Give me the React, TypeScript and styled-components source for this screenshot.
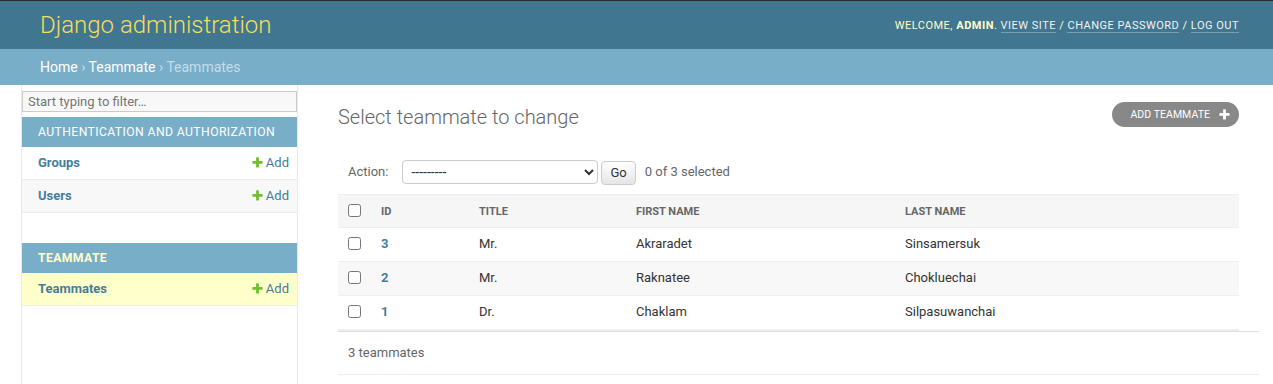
import styled, { createGlobalStyle } from 'styled-components';

const GlobalStyle = createGlobalStyle`
  html, body {
    margin: 0;
    padding: 0;
    background: #fff;
  }
  body {
    font-family: Roboto, "Liberation Sans", sans-serif;
    font-size: 14px;
    color: #333;
  }
  * { box-sizing: border-box; }
`;

interface Teammate {
  id: number;
  title: string;
  first: string;
  last: string;
}

const teammates: Teammate[] = [
  { id: 3, title: 'Mr.', first: 'Akraradet', last: 'Sinsamersuk' },
  { id: 2, title: 'Mr.', first: 'Raknatee', last: 'Chokluechai' },
  { id: 1, title: 'Dr.', first: 'Chaklam', last: 'Silpasuwanchai' },
];

const PlusIcon = ({ color = '#70bf2b' }: { color?: string }) => (
  <svg width="13" height="13" viewBox="0 0 1792 1792">
    <path
      fill={color}
      d="M1600 796v192q0 40-28 68t-68 28h-416v416q0 40-28 68t-68 28h-192q-40 0-68-28t-28-68v-416h-416q-40 0-68-28t-28-68v-192q0-40 28-68t68-28h416v-416q0-40 28-68t68-28h192q40 0 68 28t28 68v416h416q40 0 68 28t28 68z"
    />
  </svg>
);

const App = () => {
  return (
    <>
      <GlobalStyle />
      <Header>
        <Branding>Django administration</Branding>
        <UserTools>
          WELCOME, <strong>ADMIN</strong>. <TopLink>VIEW SITE</TopLink> / <TopLink>CHANGE PASSWORD</TopLink> /{' '}
          <TopLink>LOG OUT</TopLink>
        </UserTools>
      </Header>
      <Breadcrumbs>
        <a>Home</a> <Sep>›</Sep> <a>Teammate</a> <Sep>›</Sep> Teammates
      </Breadcrumbs>

      <Main>
        <ToggleNav />
        <Sidebar>
          <FilterInput placeholder="Start typing to filter…" />
          <Module>
            <Caption>AUTHENTICATION AND AUTHORIZATION</Caption>
            <NavRow>
              <NavLink>Groups</NavLink>
              <AddLink><PlusIcon /> Add</AddLink>
            </NavRow>
            <NavRow $alt>
              <NavLink>Users</NavLink>
              <AddLink><PlusIcon /> Add</AddLink>
            </NavRow>
          </Module>
          <Module>
            <Caption $current>TEAMMATE</Caption>
            <NavRow $current>
              <NavLink>Teammates</NavLink>
              <AddLink><PlusIcon /> Add</AddLink>
            </NavRow>
          </Module>
        </Sidebar>

        <Content>
          <TitleRow>
            <PageTitle>Select teammate to change</PageTitle>
            <ObjectTool>
              ADD TEAMMATE <PlusIcon color="#fff" />
            </ObjectTool>
          </TitleRow>

          <ChangeList>
            <Actions>
              <ActionLabel>Action:</ActionLabel>
              <ActionSelect defaultValue="">
                <option value="">---------</option>
                <option value="delete">Delete selected teammates</option>
              </ActionSelect>
              <GoButton>Go</GoButton>
              <Counter>0 of 3 selected</Counter>
            </Actions>

            <Results>
              <HeadRow>
                <Cell><Check type="checkbox" /></Cell>
                <HeadCell>ID</HeadCell>
                <HeadCell>TITLE</HeadCell>
                <HeadCell>FIRST NAME</HeadCell>
                <HeadCell>LAST NAME</HeadCell>
              </HeadRow>
              {teammates.map((t, i) => (
                <BodyRow key={t.id} $alt={i % 2 === 1}>
                  <Cell><Check type="checkbox" /></Cell>
                  <Cell><IdLink>{t.id}</IdLink></Cell>
                  <Cell>{t.title}</Cell>
                  <Cell>{t.first}</Cell>
                  <Cell>{t.last}</Cell>
                </BodyRow>
              ))}
            </Results>
          </ChangeList>
          <Paginator>3 teammates</Paginator>
        </Content>
      </Main>
    </>
  );
};

export default App;

const Header = styled.header`
  display: flex;
  justify-content: space-between;
  align-items: center;
  height: 49px;
  padding: 0 34px 0 40px;
  background: #417690;
  border-top: 1px solid #2b2b2b;
`;

const Branding = styled.h1`
  margin: 0;
  font-size: 24px;
  line-height: 28px;
  font-weight: 300;
  color: #f5dd5d;
`;

const UserTools = styled.div`
  font-size: 11px;
  letter-spacing: 0.5px;
  color: #ffc;
  line-height: 14px;
  margin-top: 1px;
  strong {
    font-weight: 700;
  }
`;

const TopLink = styled.a`
  color: #f2f2f2;
  border-bottom: 1px solid rgba(255, 255, 255, 0.3);
  text-decoration: none;
`;

const Breadcrumbs = styled.div`
  height: 36px;
  padding: 10px 40px;
  background: #79aec8;
  color: #c4dce8;
  font-size: 14px;
  line-height: 16px;
  a {
    color: #fff;
  }
`;

const Sep = styled.span`
  color: #c4dce8;
`;

const Main = styled.div`
  display: flex;
  min-height: calc(100vh - 85px);
`;

const ToggleNav = styled.div`
  flex: 0 0 22px;
  border-right: 1px solid #eaeaea;
`;

const Sidebar = styled.nav`
  flex: 0 0 276px;
  border-right: 1px solid #eaeaea;
`;

const FilterInput = styled.input`
  display: block;
  width: 100%;
  height: 21px;
  margin: 6px 0 5px;
  padding: 2px 5px;
  border: 1px solid #ccc;
  background: #f8f8f8;
  font-family: Roboto, "Liberation Sans", sans-serif;
  font-size: 13px;
  line-height: 15px;
  color: #333;
  outline: none;
  &::placeholder {
    color: #757575;
  }
`;

const Module = styled.div`
  margin-bottom: 30px;
`;

const Caption = styled.div<{ $current?: boolean }>`
  height: 30px;
  padding: 8px 16px;
  background: #79aec8;
  color: ${({ $current }) => ($current ? '#ffc' : '#fff')};
  font-weight: ${({ $current }) => ($current ? 700 : 400)};
  font-size: 12.2px;
  line-height: 14px;
  letter-spacing: 0.4px;
  white-space: nowrap;
`;

const NavRow = styled.div<{ $alt?: boolean; $current?: boolean }>`
  display: flex;
  justify-content: space-between;
  align-items: center;
  height: 33px;
  padding: 0 8px 2px 16px;
  border-bottom: 1px solid #eee;
  background: ${({ $alt, $current }) => ($current ? '#ffc' : $alt ? '#f8f8f8' : '#fff')};
  font-size: 13px;
`;

const NavLink = styled.a`
  color: #447e9b;
  font-weight: 700;
`;

const AddLink = styled.a`
  display: flex;
  align-items: center;
  gap: 2px;
  color: #447e9b;
  svg {
    margin-top: 1px;
  }
`;

const Content = styled.main`
  flex: 1;
  padding: 20px 14px 0 40px;
`;

const TitleRow = styled.div`
  display: flex;
  justify-content: space-between;
  align-items: flex-start;
  margin-right: 20px;
`;

const PageTitle = styled.h1`
  margin: 0 0 20px;
  font-size: 20px;
  line-height: 24px;
  font-weight: 300;
  color: #666;
`;

const ObjectTool = styled.a`
  display: flex;
  align-items: center;
  gap: 8px;
  height: 25px;
  margin-top: -3px;
  padding: 0 8px 0 18px;
  border-radius: 15px;
  background: #888;
  color: #fff;
  font-size: 10.5px;
  letter-spacing: 0.05px;
`;

const ChangeList = styled.div`
  margin-right: 20px;
`;

const Actions = styled.div`
  display: flex;
  align-items: center;
  height: 45px;
  padding: 10px;
  color: #666;
  font-size: 13px;
`;

const ActionLabel = styled.span`
  color: #666;
`;

const ActionSelect = styled.select`
  width: 196px;
  height: 24px;
  margin-left: 14px;
  padding: 0 0 0 4px;
  border: 1px solid #ccc;
  border-radius: 4px;
  background: #fff;
  font-family: Roboto, "Liberation Sans", sans-serif;
  font-size: 14px;
  color: #333;
`;

const GoButton = styled.button`
  height: 24px;
  margin: 1px 0 -1px 3px;
  padding: 4px 8px;
  border: 1px solid #ccc;
  border-radius: 4px;
  background: #fff;
  box-shadow: 0 -15px 20px -10px rgba(0, 0, 0, 0.15) inset;
  font-family: Roboto, "Liberation Sans", sans-serif;
  font-size: 13px;
  line-height: 1;
  color: #333;
`;

const Counter = styled.span`
  margin-left: 9px;
  color: #666;
`;

const Results = styled.div`
  border-bottom: 1px solid #eee;
`;

const gridCols = '33px 98px 157px 269px 1fr';

const HeadRow = styled.div`
  display: grid;
  grid-template-columns: ${gridCols};
  height: 34px;
  background: #f6f6f6;
  border-top: 1px solid #eee;
  border-bottom: 1px solid #eee;
`;

const BodyRow = styled.div<{ $alt?: boolean }>`
  display: grid;
  grid-template-columns: ${gridCols};
  height: 34px;
  padding-bottom: 2px;
  background: ${({ $alt }) => ($alt ? '#f8f8f8' : '#fff')};
  border-bottom: 1px solid #eee;
`;

const Cell = styled.div`
  display: flex;
  align-items: center;
  padding: 0 10px;
  font-size: 13px;
  color: #333;
  white-space: nowrap;
`;

const HeadCell = styled(Cell)`
  font-size: 11px;
  font-weight: 700;
  color: #666;
`;

const Check = styled.input`
  margin: 0 0 1px;
  width: 13px;
  height: 13px;
`;

const IdLink = styled.a`
  color: #447e9b;
  font-weight: 700;
`;

const Paginator = styled.div`
  padding: 10px;
  line-height: 22px;
  font-size: 13px;
  color: #666;
  border-top: 1px solid #ddd;
  border-bottom: 1px solid #eee;
`;
